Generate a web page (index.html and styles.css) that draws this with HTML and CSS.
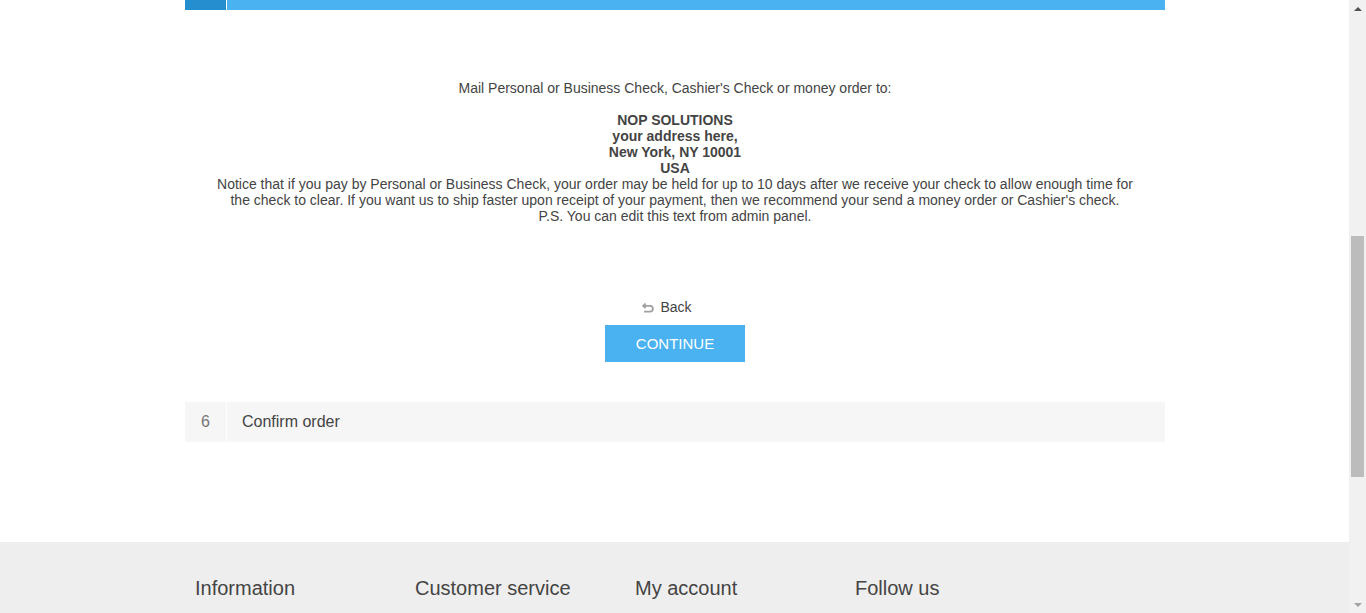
FILE: index.html
```html
<!DOCTYPE html>
<html lang="en">
<head>
<meta charset="utf-8">
<title>Checkout</title>
<link rel="stylesheet" href="styles.css">
</head>
<body>
<div class="viewport">
  <div class="page">
    <main class="checkout">
      <section class="step">
        <div class="step-title active">
          <span class="number"></span>
          <span class="title"></span>
        </div>
        <div class="step-content">
          <div class="payment-info">
            Mail Personal or Business Check, Cashier's Check or money order to:<br><br>
            <b>NOP SOLUTIONS<br>your address here,<br>New York, NY 10001<br>USA</b><br>
            Notice that if you pay by Personal or Business Check, your order may be held for up to 10 days after we receive your check to allow enough time for the check to clear. If you want us to ship faster upon receipt of your payment, then we recommend your send a money order or Cashier's check.<br>
            P.S. You can edit this text from admin panel.
          </div>
          <div class="buttons">
            <a class="back-link" href="#">
              <svg class="back-icon" width="12" height="10" viewBox="0 0 12 10" aria-hidden="true">
                <path d="M3.6 0.6 L1.2 2.8 L3.6 5 M1.2 2.8 H8 A2.9 2.9 0 0 1 8 8.6 H2" fill="none" stroke="#a0a0a0" stroke-width="1.8"/>
              </svg>
              <span>Back</span>
            </a>
            <button class="button-1" type="button">Continue</button>
          </div>
        </div>
      </section>
      <section class="step">
        <div class="step-title inactive">
          <span class="number">6</span>
          <h2 class="title">Confirm order</h2>
        </div>
      </section>
    </main>
    <footer class="footer">
      <div class="footer-upper">
        <div class="footer-block"><h3 class="footer-title">Information</h3></div>
        <div class="footer-block"><h3 class="footer-title">Customer service</h3></div>
        <div class="footer-block"><h3 class="footer-title">My account</h3></div>
        <div class="footer-block"><h3 class="footer-title">Follow us</h3></div>
      </div>
    </footer>
  </div>
  <div class="scrollbar" aria-hidden="true">
    <div class="sb-arrow"><span class="tri-up"></span></div>
    <div class="sb-track"><div class="sb-thumb"></div></div>
    <div class="sb-arrow"><span class="tri-down"></span></div>
  </div>
</div>
</body>
</html>
```

FILE: styles.css
```css
html, body {
  margin: 0;
  padding: 0;
  height: 613px;
  overflow: hidden;
  background: #fff;
  font-family: "Liberation Sans", Arial, sans-serif;
  color: #444;
}

.viewport {
  display: flex;
  height: 613px;
  overflow: hidden;
}

.page {
  width: 1349px;
  flex: 0 0 1349px;
  height: 613px;
  overflow: hidden;
}

.checkout {
  width: 980px;
  margin: 0 0 0 185px;
}

.step-title {
  display: flex;
  margin: 0;
}

.step-title.active {
  height: 10px;
}

.step-title.active .number {
  width: 41px;
  background: #248ece;
  border-right: 1px solid #fff;
}

.step-title.active .title {
  flex: 1;
  background: #4ab2f1;
}

.step-title.inactive {
  height: 40px;
  margin-top: 40px;
}

.step-title.inactive .number {
  width: 41px;
  background: #f6f6f6;
  border-right: 1px solid #fff;
  text-align: center;
  font-size: 16px;
  line-height: 40px;
  color: #777;
}

.step-title.inactive .title {
  flex: 1;
  margin: 0;
  background: #f6f6f6;
  padding-left: 15px;
  font-size: 16px;
  font-weight: normal;
  line-height: 40px;
  color: #444;
}

.step-content {
  padding-top: 70px;
}

.payment-info {
  padding: 0 25px;
  text-align: center;
  font-size: 14px;
  line-height: 16px;
  color: #444;
}

.payment-info b {
  font-weight: bold;
}

.buttons {
  margin-top: 75px;
  display: flex;
  flex-direction: column;
  align-items: center;
}

.back-link {
  display: flex;
  align-items: center;
  gap: 6px;
  height: 16px;
  margin-right: 16px;
  font-size: 14px;
  line-height: 16px;
  color: #444;
  text-decoration: none;
}

.back-icon {
  display: block;
  margin-top: 1px;
}

.button-1 {
  margin-top: 10px;
  width: 140px;
  height: 37px;
  border: none;
  padding: 0;
  background: #4ab2f1;
  color: #fff;
  font-family: "Liberation Sans", Arial, sans-serif;
  font-size: 15px;
  text-transform: uppercase;
  cursor: pointer;
}

.footer {
  margin-top: 100px;
  background: #eee;
  height: 300px;
}

.footer-upper {
  width: 970px;
  margin-left: 185px;
  padding: 34px 0 0 10px;
  display: grid;
  grid-template-columns: 220px 220px 220px 220px;
}

.footer-title {
  margin: 0;
  font-size: 20px;
  font-weight: normal;
  line-height: 24px;
  color: #444;
}

.scrollbar {
  width: 17px;
  flex: 0 0 17px;
  height: 613px;
  background: #f1f1f1;
  display: flex;
  flex-direction: column;
}

.sb-arrow {
  height: 17px;
  display: flex;
  align-items: center;
  justify-content: center;
}

.tri-up {
  width: 0;
  height: 0;
  border-left: 4px solid transparent;
  border-right: 4px solid transparent;
  border-bottom: 4px solid #505050;
}

.tri-down {
  width: 0;
  height: 0;
  border-left: 4px solid transparent;
  border-right: 4px solid transparent;
  border-top: 4px solid #a3a3a3;
}

.sb-track {
  flex: 1;
  padding-top: 219px;
}

.sb-thumb {
  margin: 0 2px;
  height: 241px;
  background: #bcbcbc;
}
```
